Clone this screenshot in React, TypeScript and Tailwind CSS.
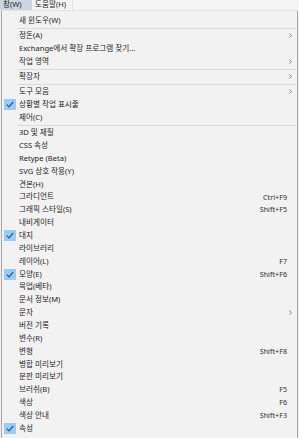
import React from 'react';

type Item =
  | { sep: true }
  | { label: string; shortcut?: string; sub?: boolean; checked?: boolean; sep?: false };

const items: Item[] = [
  { label: '새 윈도우(W)' },
  { sep: true },
  { label: '정돈(A)', sub: true },
  { label: 'Exchange에서 확장 프로그램 찾기...' },
  { label: '작업 영역', sub: true },
  { sep: true },
  { label: '확장자', sub: true },
  { sep: true },
  { label: '도구 모음', sub: true },
  { label: '상황별 작업 표시줄', checked: true },
  { label: '제어(C)' },
  { sep: true },
  { label: '3D 및 재질' },
  { label: 'CSS 속성' },
  { label: 'Retype (Beta)' },
  { label: 'SVG 상호 작용(Y)' },
  { label: '견본(H)' },
  { label: '그라디언트', shortcut: 'Ctrl+F9' },
  { label: '그래픽 스타일(S)', shortcut: 'Shift+F5' },
  { label: '내비게이터' },
  { label: '대지', checked: true },
  { label: '라이브러리' },
  { label: '레이어(L)', shortcut: 'F7' },
  { label: '모양(E)', shortcut: 'Shift+F6', checked: true },
  { label: '목업(베타)' },
  { label: '문서 정보(M)' },
  { label: '문자', sub: true },
  { label: '버전 기록' },
  { label: '변수(R)' },
  { label: '변형', shortcut: 'Shift+F8' },
  { label: '병합 미리보기' },
  { label: '분판 미리보기' },
  { label: '브러쉬(B)', shortcut: 'F5' },
  { label: '색상', shortcut: 'F6' },
  { label: '색상 안내', shortcut: 'Shift+F3' },
  { label: '속성', checked: true },
];

function Check() {
  return (
    <div className="absolute left-[2px] top-[1px] w-[12px] h-[11px] bg-[#99cbf4] flex items-center justify-center">
      <svg width="8" height="7" viewBox="0 0 8 7">
        <path d="M0.8 3.6 L3 5.8 L7.2 1" fill="none" stroke="#1d5a99" strokeWidth="1.2" />
      </svg>
    </div>
  );
}

function Arrow() {
  return (
    <svg width="3" height="5" viewBox="0 0 3 5" className="absolute right-[5px] top-[4px]">
      <path d="M0.4 0.4 L2.4 2.5 L0.4 4.6" fill="none" stroke="#7a7a7a" strokeWidth="0.9" />
    </svg>
  );
}

export default function App() {
  return (
    <div
      className="w-[299px] h-[438px] overflow-hidden bg-[#f0f0f0] text-[#262626] text-[7.6px] leading-none"
      style={{ fontFamily: '"Noto Sans", "Noto Sans CJK KR", sans-serif' }}
    >
      <div className="h-[11px] flex bg-[#f5f5f5] border-b border-[#e2e2e2]">
        <div className="w-[32px] bg-[#cdd5de] flex items-center pl-[3px]">창(W)</div>
        <div className="w-[41px] flex items-center pl-[3px] border-r border-[#e4e4e4]">도움말(H)</div>
      </div>
      <div className="ml-[1px] mr-[1px] h-[427px] bg-[#f2f2f2] border-l border-[#a8a8a8] border-r border-[#8a8a8a] pt-[3px]">
        {items.map((it, i) =>
          it.sep ? (
            <div key={i} className="h-[2.4px] flex items-center pl-[15px] pr-[1px]">
              <div className="h-px w-full bg-[#dcdcdc]" />
            </div>
          ) : (
            <div key={i} className="relative h-[12.87px] flex items-center pl-[17px] pr-[10px]">
              {it.checked && <Check />}
              <span className="flex-1 whitespace-nowrap">{it.label}</span>
              {it.shortcut && <span className="text-[#2e2e2e] text-[7.2px]">{it.shortcut}</span>}
              {it.sub && <Arrow />}
            </div>
          )
        )}
      </div>
    </div>
  );
}
